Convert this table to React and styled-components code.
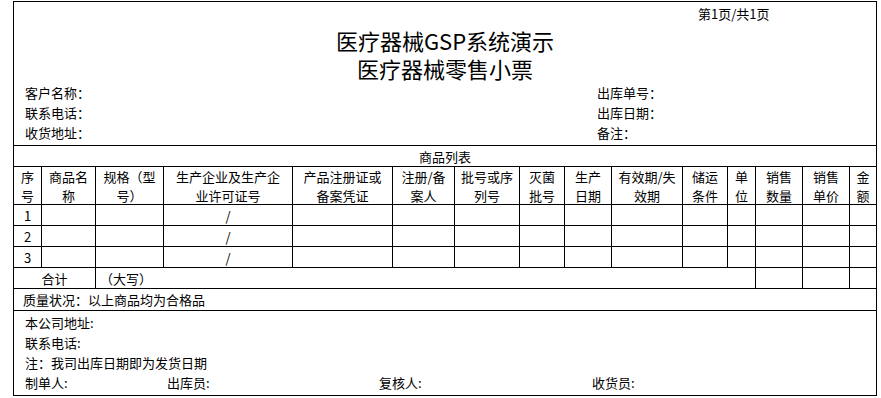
import React from "react";
import styled, { createGlobalStyle } from "styled-components";

const GlobalStyle = createGlobalStyle`
  body {
    margin: 0;
    background: #fff;
    font-family: "Noto Sans CJK SC", "Noto Sans", sans-serif;
    color: #000;
  }
`;

const Sheet = styled.div`
  box-sizing: border-box;
  width: 864px;
  margin: 1px 0 0 13px;
  border: 1px solid #000;
  font-size: 13px;
`;

const Top = styled.div`
  height: 143px;
  display: flex;
  flex-direction: column;
`;

const PageNo = styled.div`
  height: 24px;
  line-height: 23px;
  padding-left: 684px;
  font-size: 13px;
`;

const Titles = styled.div`
  height: 56px;
  line-height: 28px;
  text-align: center;
  font-size: 22px;
  white-space: pre-line;
`;

const InfoGrid = styled.div`
  margin-top: 1px;
  padding-left: 11px;
  display: grid;
  grid-template-columns: 572px 1fr;
  grid-auto-rows: 20px;
  line-height: 20px;
`;

const cols = [27, 53, 67, 128, 99, 61, 64, 44, 46, 70, 44, 27, 46, 46, 26];

const Table = styled.div`
  display: grid;
  grid-template-columns: ${cols.map((c) => `${c}px`).join(" ")};
  grid-template-rows: 20px 37px 20px 20px 20px 20px;
  gap: 1px;
  background: #000;
  border-top: 1px solid #000;
  border-bottom: 1px solid #000;
`;

const Cell = styled.div`
  background: #fff;
  display: flex;
  align-items: center;
  justify-content: ${(p) => (p.$left ? "flex-start" : "center")};
  padding-left: ${(p) => (p.$left ? "4px" : "0")};
  text-align: center;
  white-space: pre-line;
  line-height: 19px;
  grid-column: ${(p) => (p.$span ? `span ${p.$span}` : "auto")};
`;

const Quality = styled.div`
  height: 21px;
  line-height: 21px;
  padding-left: 9px;
  border-bottom: 1px solid #000;
`;

const Footer = styled.div`
  height: 82px;
  padding: 2px 0 0 11px;
  display: grid;
  grid-auto-rows: 20px;
  line-height: 20px;
`;

const Signs = styled.div`
  display: grid;
  grid-template-columns: 142px 212px 213px 1fr;
`;

const headers = [
  "序\n号",
  "商品名\n称",
  "规格（型\n号）",
  "生产企业及生产企\n业许可证号",
  "产品注册证或\n备案凭证",
  "注册/备\n案人",
  "批号或序\n列号",
  "灭菌\n批号",
  "生产\n日期",
  "有效期/失\n效期",
  "储运\n条件",
  "单\n位",
  "销售\n数量",
  "销售\n单价",
  "金\n额",
];

const DataRow = ({ no }) =>
  cols.map((_, i) => (
    <Cell key={i}>{i === 0 ? no : i === 3 ? "/" : ""}</Cell>
  ));

export default function App() {
  return (
    <>
      <GlobalStyle />
      <Sheet>
        <Top>
          <PageNo>第1页/共1页</PageNo>
          <Titles>{"医疗器械GSP系统演示\n医疗器械零售小票"}</Titles>
          <InfoGrid>
            <span>客户名称：</span>
            <span>出库单号：</span>
            <span>联系电话：</span>
            <span>出库日期：</span>
            <span>收货地址：</span>
            <span>备注：</span>
          </InfoGrid>
        </Top>
        <Table>
          <Cell $span={15}>商品列表</Cell>
          {headers.map((h) => (
            <Cell key={h}>{h}</Cell>
          ))}
          {[1, 2, 3].map((n) => (
            <DataRow key={n} no={n} />
          ))}
          <Cell $span={2}>合计</Cell>
          <Cell $span={10} $left>
            （大写）
          </Cell>
          <Cell />
          <Cell />
          <Cell />
        </Table>
        <Quality>质量状况：以上商品均为合格品</Quality>
        <Footer>
          <span>本公司地址:</span>
          <span>联系电话:</span>
          <span>注：我司出库日期即为发货日期</span>
          <Signs>
            <span>制单人:</span>
            <span>出库员:</span>
            <span>复核人:</span>
            <span>收货员:</span>
          </Signs>
        </Footer>
      </Sheet>
    </>
  );
}
